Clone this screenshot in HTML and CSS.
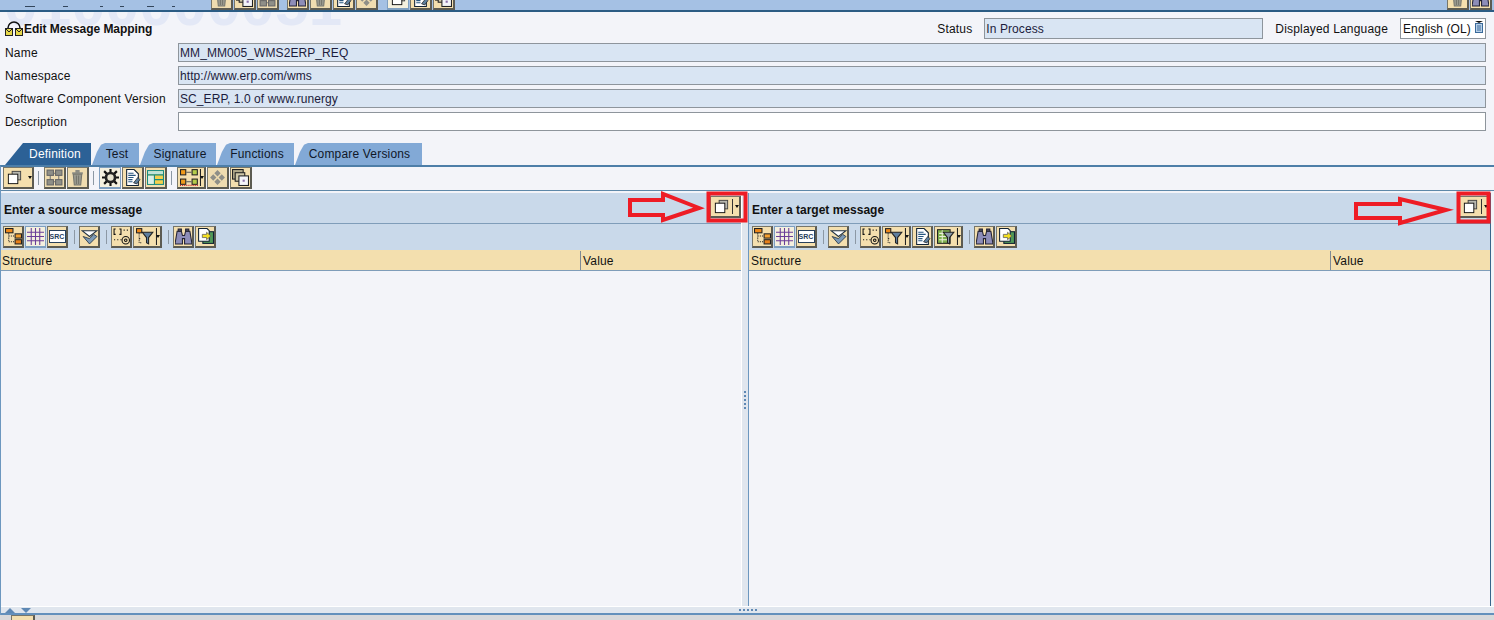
FILE: index.html
```html
<!DOCTYPE html>
<html lang="en">
<head>
    <meta charset="UTF-8">
    <title>Edit Message Mapping</title>
    <link rel="stylesheet" href="styles.css">
</head>
<body>
    <!-- shared toolbar icons -->
    <svg class="sprite" xmlns="http://www.w3.org/2000/svg">
        <symbol id="i-copy" viewBox="-1 -1 18 18">
            <rect x="5.500" y="1.500" width="9" height="9" fill="#b8b8b0" stroke="#444"/>
            <rect x="1.500" y="4.500" width="10" height="10" fill="#fff" stroke="#111"/>
        </symbol>
        <symbol id="i-nodes" viewBox="0 0 16 16">
            <path d="M4 4h8M4 12h8M4 4v8M12 4v8" stroke="#777" fill="none"/>
            <rect x="1" y="1" width="6" height="5" fill="#8f8f88" stroke="#666"/>
            <rect x="9" y="1" width="6" height="5" fill="#8f8f88" stroke="#666"/>
            <rect x="1" y="10" width="6" height="5" fill="#8f8f88" stroke="#666"/>
            <rect x="9" y="10" width="6" height="5" fill="#8f8f88" stroke="#666"/>
        </symbol>
        <symbol id="i-trash" viewBox="0 0 16 16">
            <path d="M3 3h10v2H3zM6 1h4v2H6z" fill="#8d8d84"/>
            <path d="M4 5h8l-1 10H5z" fill="#9a9a90" stroke="#77776e"/>
            <path d="M7 6v8M9 6v8" stroke="#77776e"/>
        </symbol>
        <symbol id="i-gear" viewBox="0 0 16 16">
            <path d="M8 0v16M0 8h16M2 2l12 12M14 2L2 14" stroke="#111" stroke-width="2"/>
            <circle cx="8" cy="8" r="5.500" fill="#222"/>
            <circle cx="8" cy="8" r="3" fill="#e8e4d0"/>
        </symbol>
        <symbol id="i-doc" viewBox="0 0 16 16">
            <path d="M2.500 .5h7l4 4v11h-11z" fill="#fff" stroke="#123"/>
            <path d="M4 4h5M4 6h7M4 8h5M4 10h4M4 12h4" stroke="#27567f"/>
            <path d="M9 13l4-5 2 2-3 4z" fill="#5d7f9e" stroke="#222" stroke-width=".7"/>
        </symbol>
        <symbol id="i-layout" viewBox="0 0 16 16">
            <rect x=".5" y="1.500" width="15" height="13" fill="#f6d04d" stroke="#168a82"/>
            <rect x="1" y="6" width="5.500" height="8" fill="#d9efe9"/>
            <rect x="1" y="2" width="14" height="3" fill="#bfe3da"/>
            <path d="M.5 5.500h15M7 5.500v9M7 10h8.500" stroke="#168a82" fill="none"/>
        </symbol>
        <symbol id="i-links" viewBox="0 0 20 16">
            <rect x=".5" y=".5" width="5" height="5" fill="#f09a1a" stroke="#222"/>
            <rect x="11.500" y=".5" width="5" height="5" fill="#b5cc4a" stroke="#222"/>
            <rect x=".5" y="9.500" width="5" height="5" fill="#f09a1a" stroke="#222"/>
            <rect x="11.500" y="9.500" width="5" height="5" fill="#b5cc4a" stroke="#222"/>
            <path d="M6 3h5M6 12h5" stroke="#555"/>
            <path d="M0 15.500h17" stroke="#c22" stroke-dasharray="1 1"/>
            <path d="M19.500 0v16" stroke="#222"/>
        </symbol>
        <symbol id="i-diamond" viewBox="0 0 16 16">
            <path d="M8 1l3 3-3 3-3-3zM4 5l3 3-3 3-3-3zM12 5l3 3-3 3-3-3zM8 9l3 3-3 3-3-3z" fill="#8f8f88"/>
        </symbol>
        <symbol id="i-stack" viewBox="0 0 16 16">
            <rect x=".5" y=".5" width="10" height="9" fill="#b1a98a" stroke="#222"/>
            <rect x="3" y="3.500" width="9" height="8" fill="#d0c8a8" stroke="#222"/>
            <rect x="6.500" y="6.500" width="9" height="9" fill="#f4f4f8" stroke="#222"/>
            <rect x="10" y="10" width="2" height="2" fill="#8a70a8"/>
        </symbol>
        <symbol id="i-tree" viewBox="0 0 16 16">
            <rect x=".5" y=".5" width="7" height="4" fill="#f08a1a" stroke="#222"/>
            <rect x="9.500" y="5.500" width="6" height="4" fill="#f4a030" stroke="#222"/>
            <rect x="9.500" y="11" width="6" height="4" fill="#e8801a" stroke="#222"/>
            <path d="M3.500 5v8h6M3.500 7.500h6" stroke="#222" stroke-dasharray="1 1" fill="none"/>
        </symbol>
        <symbol id="i-grid" viewBox="0 0 16 16">
            <path d="M4 0v16M8 0v16M12 0v16M0 4h16M0 8h16M0 12h16" stroke="#6a3c98" fill="none"/>
        </symbol>
        <symbol id="i-check" viewBox="0 0 16 16">
            <path d="M1 2.500h14L8 8z" fill="#fff" stroke="#234"/>
            <path d="M2 8l6 7 7-7-3-2-4 4z" fill="#7d9bb8" stroke="#234" stroke-width=".8"/>
        </symbol>
        <symbol id="i-at" viewBox="0 0 16 16">
            <path d="M2.500 1H1v5h1.500M6 1h1.500v5H6" stroke="#111" fill="none"/>
            <path d="M10 2h1M13 2h1M1 11h1M4 11h1M7 11h1" stroke="#111"/>
            <circle cx="12" cy="11.500" r="3.500" fill="none" stroke="#111"/>
            <circle cx="12" cy="11.500" r="1.200" fill="none" stroke="#111"/>
        </symbol>
        <symbol id="i-filter" viewBox="0 0 20 16">
            <rect x=".5" y=".5" width="5" height="4" fill="#f08a1a" stroke="#222"/>
            <path d="M3 5v9h3M3 10h2" stroke="#222" stroke-dasharray="1 1" fill="none"/>
            <path d="M6 4h10l-4 5v6l-2-1V9z" fill="#5f7f9f" stroke="#222"/>
            <path d="M19.500 0v16" stroke="#222"/>
        </symbol>
        <symbol id="i-sheet" viewBox="0 0 20 16">
            <rect x=".5" y="1.500" width="12" height="13" fill="#7fb04f" stroke="#222"/>
            <path d="M2 5h9M2 8h9M2 11h9M5 2v12" stroke="#e8f0d8"/>
            <path d="M6 4h10l-4 5v6l-2-1V9z" fill="#8a9aa8" stroke="#222"/>
            <path d="M19.500 0v16" stroke="#222"/>
        </symbol>
        <symbol id="i-binoc" viewBox="0 0 16 16">
            <path d="M2 3h4l1 4h2l1-4h4l2 12H9V10H7v5H0z" fill="#8d8db8" stroke="#223"/>
            <path d="M3 1h3v2H3zM10 1h3v2h-3z" fill="#556" stroke="#223"/>
        </symbol>
        <symbol id="i-export" viewBox="0 0 16 16">
            <rect x="5.500" y="3.500" width="10" height="11" fill="#4f9a58" stroke="#123"/>
            <path d="M1.500 .5h8l2 2v10h-10z" fill="#fff" stroke="#123"/>
            <path d="M5 6h4V4l4 3.500L9 11V9H5z" fill="#f4e020" stroke="#555" stroke-width=".7"/>
        </symbol>
    </svg>

    <div class="topbar">
        <span class="stub stub-a"></span><span class="stub stub-b"></span><span class="stub stub-c"></span>
        <span class="stub stub-d"></span><span class="stub stub-e"></span><span class="stub stub-f"></span>
        <div class="top-group top-group-a">
            <span class="btn off"><svg class="ic"><use href="#i-trash"/></svg></span>
            <span class="btn"><svg class="ic"><use href="#i-stack"/></svg></span>
            <span class="btn off"><svg class="ic"><use href="#i-nodes"/></svg></span>
        </div>
        <div class="top-group top-group-b">
            <span class="btn"><svg class="ic"><use href="#i-binoc"/></svg></span>
            <span class="btn off"><svg class="ic"><use href="#i-trash"/></svg></span>
            <span class="btn"><svg class="ic"><use href="#i-doc"/></svg></span>
            <span class="btn off"><svg class="ic"><use href="#i-diamond"/></svg></span>
        </div>
        <div class="top-group top-group-c">
            <span class="btn on"><svg class="ic"><use href="#i-copy"/></svg></span>
            <span class="btn"><svg class="ic"><use href="#i-doc"/></svg></span>
            <span class="btn"><svg class="ic"><use href="#i-stack"/></svg></span>
        </div>
        <div class="top-group top-group-d">
            <span class="btn"><svg class="ic"><use href="#i-trash"/></svg></span>
            <span class="btn"><svg class="ic"><use href="#i-binoc"/></svg></span>
        </div>
    </div>

    <div class="head">
        <div class="watermark">0100000051</div>
        <div class="title-row">
            <svg class="title-icon" viewBox="0 0 18 16">
                <path d="M3 7a6 6 0 0 1 12 0" fill="none" stroke="#111" stroke-width="1.500"/>
                <rect x=".5" y="7.500" width="7" height="7" fill="#e6d84a" stroke="#222"/>
                <rect x="10.500" y="7.500" width="7" height="7" fill="#e6d84a" stroke="#222"/>
                <path d="M1 8l3 3 3-3M11 8l3 3 3-3" fill="none" stroke="#222"/>
            </svg>
            <h1>Edit Message Mapping</h1>
            <span class="lbl lbl-status">Status</span>
            <div class="field field-status">In Process</div>
            <span class="lbl lbl-lang">Displayed Language</span>
            <div class="lang-select">English (OL)
                <svg class="lang-icon" viewBox="0 0 8 12">
                    <path d="M0 0h8L4 2z" fill="#111"/>
                    <rect x=".5" y="2.500" width="7" height="9" fill="#b8d0e8" stroke="#3a6a9a"/>
                    <path d="M2 5h4M2 7h4M2 9h4" stroke="#3a6a9a"/>
                </svg>
            </div>
        </div>
        <div class="form-row"><label>Name</label><div class="field">MM_MM005_WMS2ERP_REQ</div></div>
        <div class="form-row"><label>Namespace</label><div class="field">http://www.erp.com/wms</div></div>
        <div class="form-row"><label>Software Component Version</label><div class="field">SC_ERP, 1.0 of www.runergy</div></div>
        <div class="form-row"><label>Description</label><div class="field field-edit"></div></div>
    </div>

    <div class="tabs">
        <div class="tab tab-active">Definition</div>
        <div class="tab tab-test">Test</div>
        <div class="tab tab-sig">Signature</div>
        <div class="tab tab-fn">Functions</div>
        <div class="tab tab-cmp">Compare Versions</div>
    </div>

    <div class="main">
        <div class="toolbar toolbar-main">
            <span class="btn btn-drop btn-first"><svg class="ic"><use href="#i-copy"/></svg><i class="caret"></i></span>
            <i class="sep"></i>
            <span class="btn off"><svg class="ic"><use href="#i-nodes"/></svg></span>
            <span class="btn off"><svg class="ic"><use href="#i-trash"/></svg></span>
            <i class="sep"></i>
            <span class="btn on"><svg class="ic"><use href="#i-gear"/></svg></span>
            <span class="btn"><svg class="ic"><use href="#i-doc"/></svg></span>
            <span class="btn"><svg class="ic"><use href="#i-layout"/></svg></span>
            <i class="sep"></i>
            <span class="btn btn-drop"><svg class="ic-wide"><use href="#i-links"/></svg><i class="caret"></i></span>
            <span class="btn off"><svg class="ic"><use href="#i-diamond"/></svg></span>
            <span class="btn"><svg class="ic"><use href="#i-stack"/></svg></span>
        </div>

        <div class="panes">
            <section class="pane pane-src">
                <div class="pane-head">
                    <b>Enter a source message</b>
                    <span class="btn btn-drop"><svg class="ic"><use href="#i-copy"/></svg><i class="caret"></i></span>
                </div>
                <div class="toolbar toolbar-pane">
                    <span class="btn"><svg class="ic"><use href="#i-tree"/></svg></span>
                    <span class="btn on"><svg class="ic"><use href="#i-grid"/></svg></span>
                    <span class="btn"><span class="src-doc">SRC</span></span>
                    <i class="sep"></i>
                    <span class="btn"><svg class="ic"><use href="#i-check"/></svg></span>
                    <i class="sep"></i>
                    <span class="btn"><svg class="ic"><use href="#i-at"/></svg></span>
                    <span class="btn btn-drop"><svg class="ic-wide"><use href="#i-filter"/></svg><i class="caret"></i></span>
                    <i class="sep"></i>
                    <span class="btn"><svg class="ic"><use href="#i-binoc"/></svg></span>
                    <span class="btn"><svg class="ic"><use href="#i-export"/></svg></span>
                </div>
                <div class="grid-head"><span class="col-structure">Structure</span><span class="col-value">Value</span></div>
                <div class="grid-body"></div>
            </section>

            <div class="split-v"><i></i><i></i><i></i><i></i><i></i></div>

            <section class="pane pane-tgt">
                <div class="pane-head">
                    <b>Enter a target message</b>
                    <span class="btn btn-drop"><svg class="ic"><use href="#i-copy"/></svg><i class="caret"></i></span>
                </div>
                <div class="toolbar toolbar-pane">
                    <span class="btn"><svg class="ic"><use href="#i-tree"/></svg></span>
                    <span class="btn on"><svg class="ic"><use href="#i-grid"/></svg></span>
                    <span class="btn"><span class="src-doc">SRC</span></span>
                    <i class="sep"></i>
                    <span class="btn"><svg class="ic"><use href="#i-check"/></svg></span>
                    <i class="sep"></i>
                    <span class="btn"><svg class="ic"><use href="#i-at"/></svg></span>
                    <span class="btn btn-drop"><svg class="ic-wide"><use href="#i-filter"/></svg><i class="caret"></i></span>
                    <span class="btn"><svg class="ic"><use href="#i-doc"/></svg></span>
                    <span class="btn btn-drop"><svg class="ic-wide"><use href="#i-sheet"/></svg><i class="caret"></i></span>
                    <i class="sep"></i>
                    <span class="btn"><svg class="ic"><use href="#i-binoc"/></svg></span>
                    <span class="btn"><svg class="ic"><use href="#i-export"/></svg></span>
                </div>
                <div class="grid-head"><span class="col-structure">Structure</span><span class="col-value">Value</span></div>
                <div class="grid-body"></div>
            </section>
        </div>

        <div class="split-h">
            <i class="tri tri-up"></i><i class="tri tri-down"></i>
            <span class="grip"><i></i><i></i><i></i><i></i><i></i></span>
        </div>
    </div>

    <div class="footer"><span class="btn"></span></div>

    <!-- red callouts over the two message buttons -->
    <svg class="callouts" viewBox="0 0 1494 620">
        <g fill="none" stroke="#ee1c25" stroke-width="4">
            <path d="M630 200h33v-6l36 14-36 12v-5h-33z"/>
            <path d="M1356 204h44v-5l46 11-46 13v-5h-44z"/>
            <rect x="708.500" y="193.500" width="37" height="27"/>
            <rect x="1458.500" y="193.500" width="30" height="28"/>
        </g>
    </svg>
</body>
</html>
```

FILE: styles.css
```css
* {
    box-sizing: border-box;
}
html, body {
    height: 100%;
}
body {
    margin: 0;
    display: flex;
    flex-direction: column;
    overflow: hidden;
    background-color: #f3f4f9;
    color: #111;
    font-family: "Liberation Sans", Arial, sans-serif;
    font-size: 12px;
    letter-spacing: 0.18px;
    position: relative;
}
.sprite {
    display: none;
}

/* buttons */
.btn {
    flex: none;
    width: 22px;
    height: 22px;
    display: flex;
    align-items: center;
    justify-content: center;
    background-color: #f4dfae;
    border: 1px solid #77766a;
    border-right: 2px solid #5c5b52;
    border-bottom: 2px solid #5c5b52;
}
.btn.on {
    background-color: #f4f0df;
    border: 1px solid #7f9fc0;
    border-bottom-width: 2px;
}
.btn.off {
    background-color: #efdcb0;
}
.btn-drop {
    width: 29px;
    justify-content: flex-start;
    padding-left: 2px;
    position: relative;
}
.btn-first {
    width: 31px;
}
.ic {
    width: 17px;
    height: 17px;
    flex: none;
}
.ic-wide {
    width: 21px;
    height: 17px;
    flex: none;
}
.caret {
    position: absolute;
    right: 0;
    top: 8px;
    border: 2.5px solid transparent;
    border-top: 3px solid #111;
    border-bottom: 0;
}
.sep {
    flex: none;
    width: 1px;
    height: 14px;
    background-color: #8c98a4;
}
.src-doc {
    width: 17px;
    height: 13px;
    background-color: #fff;
    border: 1px solid #27405c;
    color: #27405c;
    font-size: 7px;
    font-weight: bold;
    letter-spacing: 0;
    line-height: 11px;
    text-align: center;
}

/* clipped app toolbar */
.topbar {
    flex: none;
    height: 12px;
    background-color: #a5c1e4;
    border-bottom: 2px solid #2b5c84;
    overflow: hidden;
    position: relative;
}
.top-group {
    display: flex;
    gap: 1px;
    position: absolute;
    bottom: 0;
}
.top-group-a { left: 211px; }
.top-group-b { left: 287px; }
.top-group-c { left: 387px; }
.top-group-d { left: 1447px; }
.stub {
    position: absolute;
    bottom: 3px;
    height: 1px;
    background-color: #33465c;
}
.stub-a { left: 25px; width: 10px; }
.stub-b { left: 63px; width: 5px; }
.stub-c { left: 100px; width: 3px; }
.stub-d { left: 120px; width: 4px; }
.stub-e { left: 147px; width: 7px; }
.stub-f { left: 172px; width: 3px; }

/* object header */
.head {
    flex: none;
    height: 131px;
    padding: 6px 8px 0 5px;
    display: flex;
    flex-direction: column;
    gap: 4px;
    position: relative;
    overflow: hidden;
}
.watermark {
    position: absolute;
    left: 4px;
    top: -42px;
    color: #e3e8f6;
    font-size: 60px;
    font-weight: bold;
    letter-spacing: 0.5px;
    white-space: nowrap;
}
.title-row {
    display: flex;
    align-items: center;
    height: 21px;
    position: relative;
}
.title-icon {
    width: 18px;
    height: 16px;
    margin-right: 1px;
}
h1 {
    margin: 0;
    font-size: 12px;
    font-weight: bold;
    letter-spacing: -0.05px;
}
.lbl-status {
    margin-left: auto;
}
.lbl-lang {
    margin-left: 12px;
}
.lang-select {
    flex: none;
    width: 86px;
    height: 21px;
    margin-left: 12px;
    padding-left: 2px;
    display: flex;
    align-items: center;
    justify-content: space-between;
    background-color: #fff;
    border: 1px solid #8e959c;
    white-space: nowrap;
    letter-spacing: 0.1px;
}
.lang-icon {
    width: 8px;
    height: 12px;
    margin: 0 2px 3px 0;
}
.form-row {
    display: flex;
    align-items: center;
    height: 19px;
    position: relative;
}
.form-row label {
    flex: none;
    width: 173px;
    white-space: nowrap;
}
.field {
    flex: 1;
    height: 100%;
    padding-left: 1px;
    display: flex;
    align-items: center;
    background-color: #d9e5f3;
    border: 1px solid #8e959c;
    color: #1c1c3c;
    letter-spacing: 0.08px;
}
.field-status {
    flex: none;
    width: 279px;
    height: 21px;
    margin-left: 12px;
}
.field-edit {
    background-color: #fff;
}

/* tab strip */
.tabs {
    flex: none;
    height: 22px;
    display: flex;
    padding-left: 5px;
}
.tab {
    height: 22px;
    padding: 4px 0 0 0;
    text-align: center;
    background-color: #82a9d6;
    color: #101828;
    clip-path: polygon(0 100%, 5px 40%, 9px 8%, 13px 0, 100% 0, 100% 100%);
    margin-left: 1px;
}
.tab-active {
    width: 86px;
    margin-left: 0;
    padding-left: 14px;
    background-color: #2c6196;
    color: #fff;
    clip-path: polygon(0 100%, 18px 0, 100% 0, 100% 100%);
}
.tab-test { width: 47px; padding-left: 3px; }
.tab-sig { width: 76px; padding-left: 4px; }
.tab-fn { width: 77px; padding-left: 3px; }
.tab-cmp { width: 127px; padding-left: 2px; }

/* main work area */
.main {
    flex: 1;
    min-height: 0;
    display: flex;
    flex-direction: column;
    border-top: 2px solid #4d7ea8;
    border-left: 1px solid #6c97bf;
}
.toolbar {
    display: flex;
    align-items: center;
}
.toolbar-main {
    flex: none;
    height: 24px;
    padding: 0 0 1px 2px;
    gap: 1px;
    border-bottom: 1px solid #5e88a8;
}
.toolbar-main .sep {
    margin: 0 4px 0 3px;
}
.toolbar-pane {
    flex: none;
    height: 26px;
    padding-left: 2px;
    background-color: #c9d9ea;
}
.toolbar-pane .btn {
    width: 21px;
    margin-right: 1px;
}
.toolbar-pane .btn-drop {
    width: 29px;
}
.toolbar-pane .sep {
    margin: 0 4px 0 5px;
}
.pane-tgt .toolbar-pane {
    padding-left: 3px;
}
.panes {
    flex: 1;
    min-height: 0;
    display: flex;
    padding-top: 2px;
}
.pane {
    display: flex;
    flex-direction: column;
    min-width: 0;
}
.pane-src {
    width: 740px;
}
.pane-tgt {
    flex: 1;
    border-left: 1px solid #6c97bf;
    border-right: 1px solid #38668c;
    margin-right: 3px;
}
.pane-head {
    flex: none;
    height: 31px;
    padding: 0 0 0 3px;
    display: flex;
    align-items: center;
    justify-content: space-between;
    background-color: #c9d9ea;
    border-bottom: 1px solid #7f9db9;
    letter-spacing: 0;
}
.pane-head b {
    margin-top: 3px;
}
.pane-head .btn {
    width: 31px;
    margin-bottom: 2px;
}
.pane-head .btn::after {
    content: "";
    position: absolute;
    right: 6px;
    top: 2px;
    width: 1px;
    height: 15px;
    background-color: #333;
}
.grid-head {
    flex: none;
    height: 21px;
    padding-top: 1px;
    display: flex;
    background-color: #f3dfae;
    border-bottom: 1px solid #7f9db9;
    line-height: 20px;
}
.col-structure {
    width: 580px;
    padding-left: 1px;
    border-right: 1px solid #7f8a94;
}
.pane-tgt .col-structure {
    width: 582px;
    padding-left: 2px;
}
.col-value {
    padding-left: 2px;
}
.grid-body {
    flex: 1;
}
.split-v {
    flex: none;
    width: 7px;
    background-color: #e0e6ee;
    border-left: 1px solid #fff;
    display: flex;
    flex-direction: column;
    align-items: center;
    justify-content: center;
    gap: 2px;
}
.split-v i, .grip i {
    display: block;
    width: 2px;
    height: 2px;
    background-color: #5e88b4;
}
.split-h {
    flex: none;
    height: 9px;
    background-color: #e0e6ee;
    border-top: 1px solid #fff;
    border-bottom: 2px solid #6390bc;
    display: flex;
    justify-content: center;
    align-items: center;
    position: relative;
}
.grip {
    display: flex;
    gap: 2px;
}
.tri {
    position: absolute;
    border: 5px solid transparent;
}
.tri-up {
    left: 4px;
    top: 1px;
    border-bottom-color: #5e88b4;
    border-top: 0;
}
.tri-down {
    left: 20px;
    top: 1px;
    border-top-color: #5e88b4;
    border-bottom: 0;
}
.footer {
    flex: none;
    height: 5px;
    background-color: #d8d8da;
    padding-left: 11px;
    overflow: hidden;
}
.footer .btn {
    width: 24px;
}

/* annotation layer */
.callouts {
    position: absolute;
    left: 0;
    top: 0;
    width: 1494px;
    height: 620px;
    pointer-events: none;
}
```
